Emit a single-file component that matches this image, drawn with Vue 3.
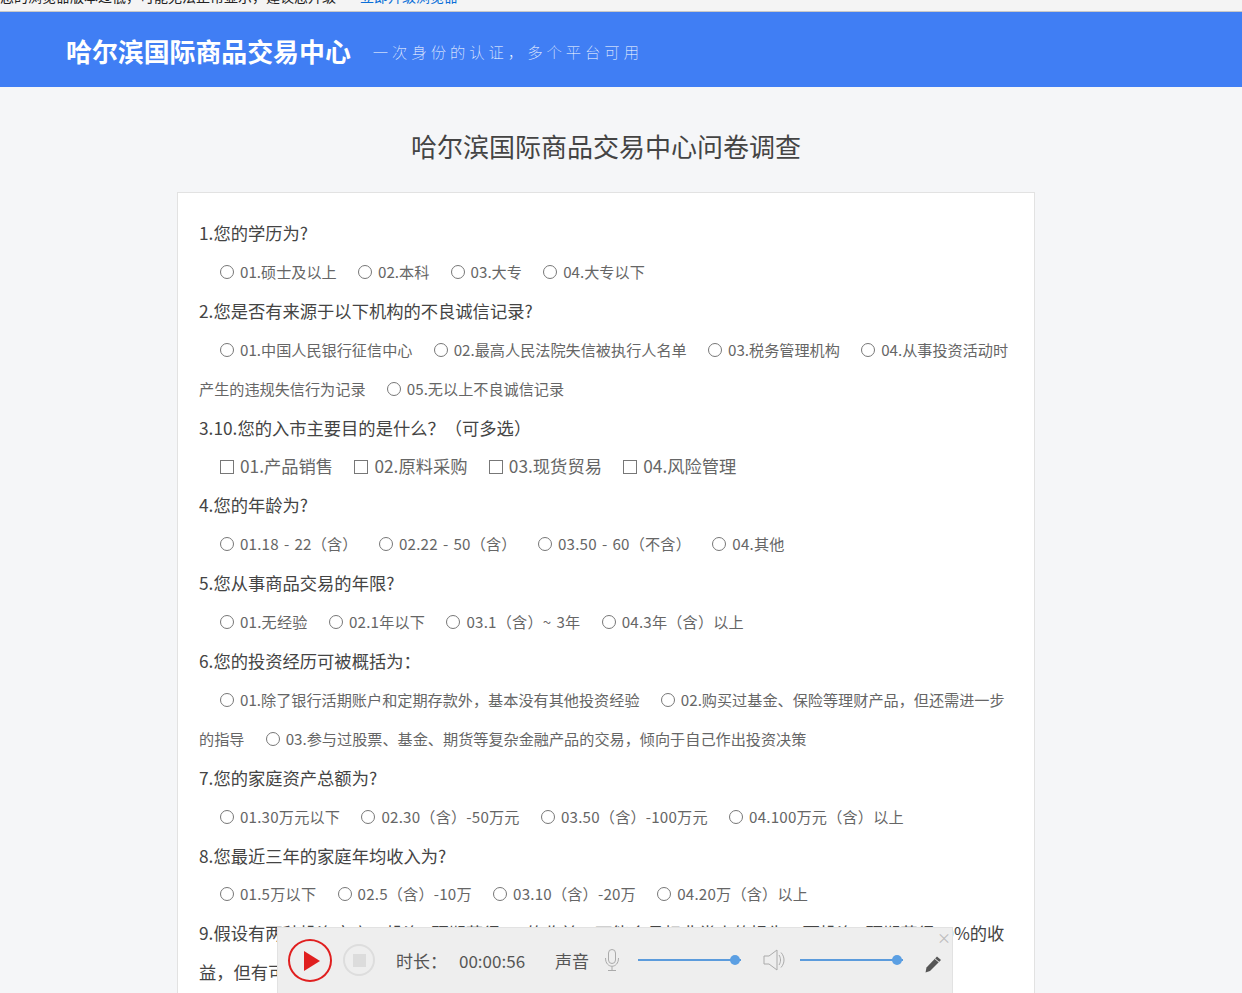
<template>
  <div class="page">
    <div class="notice">
      <span class="notice-text">您的浏览器版本过低，可能无法正常显示，建议您升级</span>
      <a class="notice-link">立即升级浏览器</a>
    </div>
    <header class="topbar">
      <span class="brand">哈尔滨国际商品交易中心</span>
      <span class="slogan">一次身份的认证，多个平台可用</span>
    </header>
    <h1 class="title">哈尔滨国际商品交易中心问卷调查</h1>
    <div class="card">
      <div v-for="q in questions" :key="q.title" class="question">
        <div class="q-title">{{ q.title }}</div>
        <div class="q-opts" :class="{ big: q.multi, wide: q.wide }">
          <template v-for="o in q.options" :key="o">
            <label class="opt"><input :type="q.multi ? 'checkbox' : 'radio'" :name="q.title" />{{ o }}</label>
          </template>
        </div>
      </div>
      <div class="q-title q-last">9.假设有两种投资方案：投资A预期获得5%的收益，可能会承担非常小的损失；而投资B预期获得10%的收益，但有可能面临25%甚至更高的亏损。您将您的大部分资金投资于：</div>
    </div>

    <div class="player">
      <span class="close">×</span>
      <button class="play">
        <svg width="16" height="20" viewBox="0 0 16 20"><path d="M0 0 L16 10 L0 20 Z" fill="#e01f1f" /></svg>
      </button>
      <button class="stop"><i></i></button>
      <span class="label time-label">时长：</span>
      <span class="label time">00:00:56</span>
      <span class="label sound">声音</span>
      <svg class="mic" width="16" height="22" viewBox="0 0 16 22" fill="none" stroke="#aaa" stroke-width="1">
        <rect x="4.5" y="0.5" width="7" height="14" rx="3.5" />
        <path d="M1.5 9 C1.5 20 14.5 20 14.5 9 M8 17.5 V21.5 M4 21.5 H12" />
      </svg>
      <div class="slider"><i></i></div>
      <svg class="spk" width="23" height="22" viewBox="0 0 23 22" fill="none" stroke="#aaa" stroke-width="1">
        <path d="M1 7 H6 L14 1 V21 L6 15 H1 Z" />
        <path d="M16 6 C18 9 18 13 16 16 M18 3.5 C22 8 22 14 18 18.5" />
      </svg>
      <div class="slider second"><i></i></div>
      <svg class="pen" width="18" height="17" viewBox="0 0 18 17">
        <path d="M13 0.5 L17 4 L6 15 L1.5 16.5 L2.5 11.5 Z" fill="#555" />
        <path d="M10.8 2.6 L15 6.2" stroke="#eee" stroke-width="1" />
      </svg>
    </div>
  </div>
</template>

<script setup>
const questions = [
  { title: '1.您的学历为?', options: ['01.硕士及以上', '02.本科', '03.大专', '04.大专以下'] },
  {
    title: '2.您是否有来源于以下机构的不良诚信记录?',
    options: ['01.中国人民银行征信中心', '02.最高人民法院失信被执行人名单', '03.税务管理机构', '04.从事投资活动时产生的违规失信行为记录', '05.无以上不良诚信记录']
  },
  { title: '3.10.您的入市主要目的是什么？（可多选）', multi: true, options: ['01.产品销售', '02.原料采购', '03.现货贸易', '04.风险管理'] },
  { title: '4.您的年龄为?', wide: true, options: ['01.18 - 22（含）', '02.22 - 50（含）', '03.50 - 60（不含）', '04.其他'] },
  { title: '5.您从事商品交易的年限?', wide: true, options: ['01.无经验', '02.1年以下', '03.1（含）~ 3年', '04.3年（含）以上'] },
  {
    title: '6.您的投资经历可被概括为：',
    options: ['01.除了银行活期账户和定期存款外，基本没有其他投资经验', '02.购买过基金、保险等理财产品，但还需进一步的指导', '03.参与过股票、基金、期货等复杂金融产品的交易，倾向于自己作出投资决策']
  },
  { title: '7.您的家庭资产总额为?', wide: true, options: ['01.30万元以下', '02.30（含）-50万元', '03.50（含）-100万元', '04.100万元（含）以上'] },
  { title: '8.您最近三年的家庭年均收入为?', wide: true, options: ['01.5万以下', '02.5（含）-10万', '03.10（含）-20万', '04.20万（含）以上'] }
]
</script>

<style>
html, body { margin: 0; background: #f5f6f8; }
</style>

<style scoped>
.page {
  position: relative;
  height: 993px;
  overflow: hidden;
  background: #f5f6f8;
  font-family: "Noto Sans CJK SC", "Noto Sans", sans-serif;
  color: #444;
}
.notice {
  height: 11px;
  overflow: hidden;
  background: #f4f4f4;
  border-bottom: 1px solid #c8c8c8;
  font-size: 14px;
  line-height: 14px;
  white-space: nowrap;
  color: #222;
}
.notice-text, .notice-link { position: relative; top: -11px; }
.notice-link { margin-left: 24px; color: #0a6fd8; }
.topbar {
  height: 75px;
  box-sizing: border-box;
  padding: 2px 0 0 66px;
  background: #407ef4;
  color: #fff;
  display: flex;
  align-items: center;
}
.brand { font-size: 25.9px; font-weight: 700; }
.slogan { margin-left: 22px; font-size: 15.3px; letter-spacing: 4px; font-weight: 100; }
.title {
  width: 858px;
  margin: 0 0 0 177px;
  padding-top: 39px;
  height: 66px;
  text-align: center;
  font-size: 26px;
  line-height: 40px;
  font-weight: 400;
  color: #444;
}
.card {
  width: 858px;
  margin-left: 177px;
  box-sizing: border-box;
  padding: 21px 22px 40px 21px;
  background: #fff;
  border: 1px solid #e2e2e2;
  line-height: 38.9px;
}
.q-title { font-size: 17.3px; color: #444; }
.q-opts { margin: -1px 0 1px; font-size: 15.15px; color: #666; }
.q-opts.big { margin: 0; font-size: 17.3px; }
.q-opts.wide { letter-spacing: .2px; word-spacing: 1.5px; }
.opt { margin-right: 21.3px; }
.opt:first-child { margin-left: 21px; }
.opt input {
  appearance: none;
  width: 14px;
  height: 14px;
  margin: 0 6px 0 0;
  border: 1px solid #777;
  border-radius: 50%;
  background: #fff;
  box-sizing: border-box;
  vertical-align: -1px;
}
.opt input[type="checkbox"] { border-radius: 0; }
.player {
  position: absolute;
  left: 277px;
  top: 927px;
  width: 676px;
  height: 66px;
  box-sizing: border-box;
  padding: 11px 0 0 10px;
  background: #eee;
  border: 1px solid #e2e2e2;
  border-bottom: none;
  display: flex;
  align-items: flex-start;
}
.close { position: absolute; right: 1px; top: 0; font-size: 14px; line-height: 18px; color: #bbb; }
.play {
  width: 44px;
  height: 43px;
  box-sizing: border-box;
  padding: 0 0 0 3px;
  border: 2px solid #e01f1f;
  border-radius: 50%;
  background: transparent;
  display: flex;
  align-items: center;
  justify-content: center;
}
.stop {
  width: 32px;
  height: 32px;
  margin: 5px 0 0 11px;
  padding: 0;
  box-sizing: border-box;
  border: 2px solid #ddd;
  border-radius: 50%;
  background: transparent;
  display: flex;
  align-items: center;
  justify-content: center;
}
.stop i { width: 13px; height: 13px; background: #dcdcdc; }
.label { font-size: 17px; line-height: 43px; color: #555; white-space: nowrap; }
.time-label { margin-left: 21px; }
.time { margin-left: 12px; }
.sound { margin-left: 30px; }
.mic { margin: 10px 0 0 15px; }
.slider {
  position: relative;
  width: 103px;
  height: 2px;
  margin: 20px 0 0 18px;
  background: #5b9bdc;
}
.slider i {
  position: absolute;
  right: 1px;
  top: -4px;
  width: 10px;
  height: 10px;
  border-radius: 50%;
  background: #5b9fe3;
}
.second { margin-left: 14px; }
.spk { margin: 10px 0 0 22px; }
.pen { margin: 17px 0 0 21px; }
</style>
